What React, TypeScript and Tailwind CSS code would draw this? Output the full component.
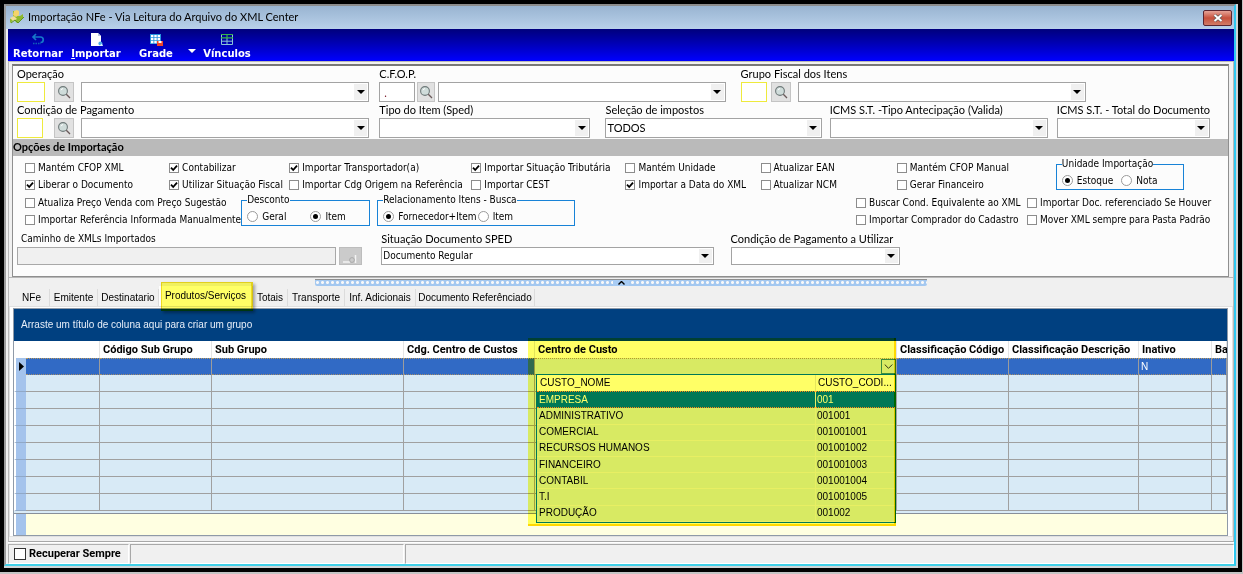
import React from 'react';

const TAHOMA = 'font-["DejaVu_Sans_Condensed","DejaVu_Sans",sans-serif] text-[10px]';

function Combo({ label, value = '', small = false, bare = false, className = '' }: { label: string; value?: string; small?: boolean; bare?: boolean; className?: string }) {
  const id = React.useId();
  return (
    <div className={`min-w-0 ${className}`}>
      {!bare && <FieldLabel id={id}>{label}</FieldLabel>}
      <div className={`relative flex border border-[#a3a3a3] bg-white ${small ? 'h-[18px]' : 'h-5'}`}>
        <select id={id} aria-label={bare ? label : undefined} defaultValue={value} className={`min-w-0 flex-1 appearance-none bg-transparent pl-px leading-4 outline-none ${small ? TAHOMA : 'text-[11px]'}`}>
          <option value={value}>{value}</option>
        </select>
        <span className="pointer-events-none absolute inset-y-0 right-0 m-px flex w-[13px] items-center justify-center bg-[#f0f0f0]">
          <svg width="8" height="4" viewBox="0 0 8 4"><path d="M0 0h8L4 4z" fill="#000" /></svg>
        </span>
      </div>
    </div>
  );
}

function FieldLabel({ id, children, font = 'text-[11px]' }: { id: string; children: React.ReactNode; font?: string }) {
  return <label htmlFor={id} className={`block h-[15px] whitespace-nowrap leading-[14px] ${font}`}>{children}</label>;
}

function Lookup({ label, code = '', input, search, gap, className = '' }: { label: string; code?: string; input: string; search: string; gap: string; className?: string }) {
  const id = React.useId();
  return (
    <div className={`min-w-0 ${className}`}>
      <FieldLabel id={id}>{label}</FieldLabel>
      <div className="flex">
        <input id={id} defaultValue={code} className={`h-5 shrink-0 bg-white px-1 text-[11px] text-[#7a1a2a] outline-none ${input}`} />
        <button type="button" aria-label={`Pesquisar ${label}`} className={`flex h-5 shrink-0 items-center justify-center border border-[#c4c4c4] bg-[#e1e1e1] ${search}`}>
          <svg width="14" height="14" viewBox="0 0 14 14" fill="none">
            <circle cx="6" cy="6" r="4.4" fill="#cfdcda" stroke="#6f7a7a" strokeWidth="1.1" />
            <path d="M4 5.2A2.4 2.4 0 0 1 6 3.6" stroke="#fff" />
            <path d="M9.3 9.3L13 13" stroke="#6a5a5a" strokeWidth="1.3" />
          </svg>
        </button>
        <Combo label={`${label} - descrição`} bare className={`flex-1 ${gap}`} />
      </div>
    </div>
  );
}

function Check({ children, checked = false }: { children: React.ReactNode; checked?: boolean }) {
  return (
    <label className="flex h-[17px] items-center gap-[3px] whitespace-nowrap">
      <span className="relative flex size-[10px] shrink-0">
        <input type="checkbox" defaultChecked={checked} className="peer size-[10px] appearance-none border border-[#8c8c8c] bg-white" />
        <svg className="pointer-events-none absolute inset-0 hidden peer-checked:block" width="10" height="10" viewBox="0 0 10 10" fill="none">
          <path d="M2 4.6L4.2 7L8 2.6" stroke="#000" strokeWidth="1.8" />
        </svg>
      </span>
      {children}
    </label>
  );
}

function Radio({ children, name, checked = false }: { children: React.ReactNode; name: string; checked?: boolean }) {
  return (
    <label className="flex items-center gap-1 whitespace-nowrap">
      <span className="relative flex size-[11px] shrink-0">
        <input type="radio" name={name} defaultChecked={checked} className="peer size-[11px] appearance-none rounded-full border border-[#9a9a9a] bg-white" />
        <span className="pointer-events-none absolute inset-[3px] hidden rounded-full bg-black peer-checked:block" />
      </span>
      {children}
    </label>
  );
}

function Group({ title, children, className = '' }: { title: string; children: React.ReactNode; className?: string }) {
  return (
    <fieldset className={`h-8 min-w-0 border border-[#1883d7] pl-[5px] ${className}`}>
      <legend className="h-3 whitespace-nowrap leading-3">{title}</legend>
      <div className="flex h-5 items-center">{children}</div>
    </fieldset>
  );
}

function ToolButton({ icon, children, className = '' }: { icon: React.ReactNode; children: React.ReactNode; className?: string }) {
  return (
    <button type="button" className={`flex flex-col items-center ${className}`}>
      {icon}
      <span className="leading-4">{children}</span>
    </button>
  );
}

function Toolbar() {
  return (
    <div className='flex h-8 items-start bg-linear-to-b from-[#00007c] to-[#0000ff] pt-[4px] pl-[6px] font-["DejaVu_Sans",sans-serif] text-[10px] font-bold text-white'>
      <ToolButton className="w-12" icon={
        <svg width="14" height="13" viewBox="0 0 14 13" fill="none">
          <path d="M5 1L2 4l3 3M2 4h7.5a2.700 2.700 0 0 1 0 5.500" stroke="#1678c8" strokeWidth="1.7" />
          <path d="M2 10.500h8" stroke="#1060b8" strokeWidth="1.4" strokeDasharray="1.5 1" />
        </svg>}>Retornar</ToolButton>
      <ToolButton className="ml-[10px] w-12" icon={
        <svg width="14" height="13" viewBox="0 0 14 13">
          <path d="M2 0h7l3 3v10H2z" fill="#fff" /><path d="M9 0v3h3z" fill="#b9c8de" />
          <circle cx="11.4" cy="10.4" r="2" fill="#49a8e8" /><path d="M10 13h4l-1-2.400z" fill="#d7f3ff" />
        </svg>}><span className="underline">I</span>mportar</ToolButton>
      <ToolButton className="ml-[18px] w-9" icon={
        <svg width="14" height="13" viewBox="0 0 14 13">
          <path d="M1 1h11v10H1z" fill="#2795df" />
          <path d="M2 2h2.4v2.2H2zM5.3 2h2.4v2.2H5.3zM8.6 2H11v2.2H8.6zM2 5h2.4v2.2H2zM5.3 5h2.4v2.2H5.3zM8.6 5H11v2.2H8.6zM2 8h2.4v2.2H2zM5.3 8h2.4v2.2H5.3z" fill="#fff" />
          <path d="M8 8h6v5H8z" fill="#f04428" /><path d="M9.5 8h3v2h-3z" fill="#fff" />
        </svg>}>Grade</ToolButton>
      <button type="button" aria-label="Mais opções de grade" className="mt-4 ml-[14px]">
        <svg width="8" height="4" viewBox="0 0 8 4"><path d="M0 0h8L4 4z" fill="#fff" /></svg>
      </button>
      <ToolButton className="ml-[9px] w-11" icon={
        <svg width="14" height="13" viewBox="0 0 14 13" fill="none">
          <path d="M1.5 1.5h11v10h-11zM1.5 8.2h11M7 5v6.5" stroke="#8bc4d8" />
          <path d="M1 1.5h12M1 4.8h12M7 1v4" stroke="#35b24a" strokeWidth="1.2" />
        </svg>}>Vínculos</ToolButton>
    </div>
  );
}

function ImportForm() {
  const pathId = React.useId();
  return (
    <section className="border border-t-2 border-[#8f8f8f] border-t-[#777] bg-[#fcfcfc] pt-px">
      <div className="flex flex-col gap-px pb-px pl-1">
        <div className="grid grid-cols-[352fr_10fr_346fr_15fr_345fr_142fr]">
          <Lookup label="Operação" input="w-7 border border-[#eeea3c]" search="ml-[9px] w-5" gap="ml-[7px]" />
          <Lookup className="col-start-3" label="C.F.O.P." code="." input="w-9 border border-[#a3a3a3]" search="ml-[2px] w-[18px]" gap="ml-[3px]" />
          <Lookup className="col-start-5" label="Grupo Fiscal dos Itens" input="w-[26px] border border-[#eeea3c]" search="ml-1 w-5" gap="ml-[7px]" />
        </div>
        <div className="grid grid-cols-[352fr_10fr_211fr_15fr_216fr_8fr_218fr_9fr_153fr_18fr]">
          <Lookup label="Condição de Pagamento" input="w-[26px] border border-[#eeea3c]" search="ml-[11px] w-5" gap="ml-[7px]" />
          <Combo className="col-start-3" label="Tipo do Item (Sped)" />
          <Combo className="col-start-5" label="Seleção de impostos" value="TODOS" />
          <Combo className="col-start-7" label="ICMS S.T. -Tipo Antecipação (Valida)" />
          <Combo className="col-start-9" label="ICMS S.T. - Total do Documento" />
        </div>
      </div>
      <h2 className="h-[17px] bg-[#bababa] text-[11px] leading-4 font-bold">Opções de Importação</h2>
      <div className={`pt-[3px] ${TAHOMA}`}>
        <div className="grid grid-cols-[144fr_120fr_182fr_154fr_135fr_136fr_159fr_172fr] pl-3">
          <div><Check>Mantém CFOP XML</Check><Check checked>Liberar o Documento</Check></div>
          <div><Check checked>Contabilizar</Check><Check checked>Utilizar Situação Fiscal</Check></div>
          <div><Check checked>Importar Transportador(a)</Check><Check>Importar Cdg Origem na Referência</Check></div>
          <div><Check checked>Importar Situação Tributária</Check><Check>Importar CEST</Check></div>
          <div><Check>Mantém Unidade</Check><Check checked>Importar a Data do XML</Check></div>
          <div><Check>Atualizar EAN</Check><Check>Atualizar NCM</Check></div>
          <div><Check>Mantém CFOP Manual</Check><Check>Gerar Financeiro</Check></div>
          <Group title="Unidade Importação" className="mr-11 -mt-px">
            <Radio name="unidade" checked>Estoque</Radio><span className="w-2" /><Radio name="unidade">Nota</Radio>
          </Group>
        </div>
        <div className="mt-px grid grid-cols-[215fr_129fr_7fr_198fr_281fr_171fr_201fr] pl-3">
          <div><Check>Atualiza Preço Venda com Preço Sugestão</Check><Check>Importar Referência Informada Manualmente</Check></div>
          <Group title="Desconto">
            <Radio name="desconto">Geral</Radio><span className="w-6" /><Radio name="desconto" checked>Item</Radio>
          </Group>
          <Group title="Relacionamento Itens - Busca" className="col-start-4">
            <Radio name="relacao" checked>Fornecedor+Item</Radio><span className="w-px" /><Radio name="relacao">Item</Radio>
          </Group>
          <div className="col-start-6"><Check>Buscar Cond. Equivalente ao XML</Check><Check>Importar Comprador do Cadastro</Check></div>
          <div className="col-start-7"><Check>Importar Doc. referenciado Se Houver</Check><Check>Mover XML sempre para Pasta Padrão</Check></div>
        </div>
      </div>
      <div className="grid grid-cols-[345fr_19fr_332fr_17fr_169fr_328fr] pt-1 pb-[11px] pl-1">
        <div>
          <FieldLabel id={pathId} font={`pl-1 ${TAHOMA}`}>Caminho de XMLs Importados</FieldLabel>
          <div className="flex gap-[3px]">
            <input id={pathId} disabled className="h-[18px] min-w-0 flex-1 border border-[#a8a8a8] bg-[#f0f0f0]" />
            <button type="button" disabled aria-label="Selecionar pasta" className="flex h-[18px] w-[23px] items-end justify-end border border-[#bdbdbd] bg-[#cbcbcb] pr-1">
              <svg width="14" height="10" viewBox="0 0 14 10" fill="none"><path d="M0 8h7M12.500 1v8" stroke="#f4f4f4" strokeWidth="1.500" /><circle cx="9" cy="6" r="2.400" stroke="#aaa" /></svg>
            </button>
          </div>
        </div>
        <Combo small className="col-start-3" label="Situação Documento SPED" value="Documento Regular" />
        <Combo small className="col-start-5" label="Condição de Pagamento a Utilizar" />
      </div>
    </section>
  );
}

const tabs = [
  ['NFe', 'w-9'], ['Emitente', 'w-12'], ['Destinatario', 'w-[61px]'], ['Produtos/Serviços', 'w-[94px]'],
  ['Totais', 'w-[35px]'], ['Transporte', 'w-[57px]'], ['Inf. Adicionais', 'w-[71px]'], ['Documento Referênciado', 'w-[119px]'],
];

function Tabs() {
  return (
    <div role="tablist" className="flex h-[17px] pl-[5px]">
      {tabs.map(([name, width], i) => (
        <button key={name} role="tab" type="button" aria-selected={i === 3} className={`relative shrink-0 border-r border-[#dcdcdc] whitespace-nowrap ${width} ${i === 3 ? '-mt-[3px] bg-white' : ''}`}>
          {name}
          {i === 3 && <span className="absolute -top-1 -right-px left-[2px] z-20 h-[29px] border border-r-2 border-b-2 border-[#f0dc20] bg-[#ffff66] shadow-[2px_2px_3px_#aaa] mix-blend-multiply" />}
        </button>
      ))}
    </div>
  );
}

const headers = ['', 'Código Sub Grupo', 'Sub Grupo', 'Cdg. Centro de Custos', 'Centro de Custo', 'Classificação Código', 'Classificação Descrição', 'Inativo', 'Ba'];

const costCenters = [
  ['EMPRESA', '001'], ['ADMINISTRATIVO', '001001'], ['COMERCIAL', '001001001'], ['RECURSOS HUMANOS', '001001002'],
  ['FINANCEIRO', '001001003'], ['CONTABIL', '001001004'], ['T.I', '001001005'], ['PRODUÇÃO', '001002'],
];

function CostCenterList() {
  return (
    <div className="absolute top-[15px] right-0 left-[1px] z-10 h-[149px] border border-[#0078d7] bg-[#d8eaf6] text-black">
      <table className="size-full table-fixed border-separate border-spacing-0 text-left">
        <colgroup><col /><col className="w-20" /></colgroup>
        <thead>
          <tr className="h-4 bg-white">
            <th className="pl-[3px] font-normal">CUSTO_NOME</th>
            <th className="border-l border-[#e6e6e6] pl-[2px] font-normal">CUSTO_CODI...</th>
          </tr>
        </thead>
        <tbody>
          {costCenters.map(([name, code], i) => (
            <tr key={code} className={i === 0 ? 'bg-[#0078d7] text-white' : ''}>
              <td className={`pl-[2px] ${i === 0 ? 'border-y border-dotted border-[#ff8728]' : 'border-b border-[#e8eff6]'}`}>{name}</td>
              <td className={`border-l border-l-[#e8eff6] pl-px ${i === 0 ? 'border-y border-y-[#ff8728] [border-bottom-style:dotted] [border-top-style:dotted]' : 'border-b border-[#e8eff6]'}`}>{code}</td>
            </tr>
          ))}
        </tbody>
      </table>
    </div>
  );
}

function Grid() {
  return (
    <div className="relative overflow-hidden border border-[#8f9aa8]">
      <div className="flex h-8 items-center bg-[#004080] pl-[7px] text-[#e6eef8]">Arraste um título de coluna aqui para criar um grupo</div>
      <table className="w-full table-fixed border-separate border-spacing-0">
        <colgroup>
          <col className="w-3" /><col className="w-[74px]" /><col className="w-[112px]" /><col className="w-[192px]" /><col className="w-[131px]" />
          <col className="w-[362px]" /><col className="w-[112px]" /><col className="w-[130px]" /><col className="w-[73px]" /><col />
        </colgroup>
        <thead>
          <tr className='h-[17px] bg-white text-left font-["Roboto",sans-serif] text-[11px]'>
            <th />
            {headers.map((h, i) => (
              <th key={i} className="relative h-[17px] border-r border-[#e4e4e4] p-0 pl-[3px] whitespace-nowrap">
                {h}
                {i === 4 && <span className="pointer-events-none absolute -top-[3px] right-0 -left-[7px] z-20 h-[188px] border-r-2 border-b-2 border-[#ffd800] bg-[#ffff66] mix-blend-multiply" />}
              </th>
            ))}
          </tr>
        </thead>
        <tbody>
          <tr className="text-white">
            <td className="h-[17px] border-l-2 border-white bg-[#a4c3ec] p-0"><svg className="m-auto" width="5" height="9" viewBox="0 0 5 9"><path d="M0 0l5 4.500L0 9z" fill="#000" /></svg></td>
            {headers.map((_, i) => (
              <td key={i} className={`h-[17px] border-t border-r border-b border-r-[#9c9c9c] border-t-[#b89a60] border-b-[#a08c6c] p-0 pl-[2px] leading-[14px] [border-bottom-style:dotted] [border-top-style:dotted] ${i === 4 ? 'relative bg-[#d8eaf6]' : 'bg-[#316ac5]'}`}>
                {i === 7 && 'N'}
                {i === 4 && (
                  <>
                    <button type="button" aria-label="Abrir centros de custo" className="absolute top-0 right-0 flex h-[15px] w-[15px] items-center justify-center border border-[#3c8c98] bg-[#d8eaf6]">
                      <svg width="9" height="5" viewBox="0 0 9 5" fill="none"><path d="M.7.500l3.800 3.800L8.300.500" stroke="#333" /></svg>
                    </button>
                    <CostCenterList />
                  </>
                )}
              </td>
            ))}
          </tr>
          {Array.from({ length: 8 }, (_, r) => (
            <tr key={r}>
              <td className="h-[17px] border-b border-l-2 border-b-[#8fa8c8] border-l-white bg-[#a4c3ec] p-0" />
              {headers.map((_, i) => <td key={i} className="h-[17px] border-r border-b border-[#a0a0a0] bg-[#d8eaf6] p-0" />)}
            </tr>
          ))}
        </tbody>
      </table>
      <div className="h-[3px] border-b border-[#888f99] bg-[#d8eaf6]" />
      <div className="flex h-[21px] bg-[#ffffe1]"><div className="w-3 border-l-2 border-white bg-[#a4c3ec]" /></div>
    </div>
  );
}

export default function App() {
  return (
    <div className='min-h-screen bg-[#c4c4c4] pr-px pb-px font-["Lato",sans-serif] text-black'>
      <div className="border-4 border-black bg-[#d0d4d6] pr-[2px] pb-[2px]">
        <main className="border-2 border-t-[#8c8c8c] border-r-[#30c8f0] border-b-[#40d0e8] border-l-[#9c9c9c] bg-[#f0f0f0]">
          <header className="flex h-[23px] items-center bg-linear-to-b from-[#99b4d1] to-[#b9d1ea] pr-[2px] pl-[3px]">
            <svg width="16" height="15" viewBox="0 0 16 15">
              <path d="M4 1h4v5h3l3-2v4l-6 5-3-3-4 3V9l3-2z" fill="#8db92c" />
              <path d="M5 1l3-1 2 1v4L7 7 4 5z" fill="#f5d36a" /><path d="M1 8l4-2 3 3-4 2z" fill="#f0dc9a" />
              <path d="M2 13l4-3 3 3 6-6" stroke="#5d951c" fill="none" />
            </svg>
            <h1 className="ml-[3px] flex-1 text-[11px]">Importação NFe - Via Leitura do Arquivo do XML Center</h1>
            <button type="button" aria-label="Fechar" className="flex h-4 w-[29px] items-center justify-center rounded-xs border border-[#5a2530] bg-linear-to-b from-[#e5a397] via-[#c6503c] via-50% to-[#d07a66]">
              <svg width="10" height="8" viewBox="0 0 10 8"><path d="M1.500 1l7 6M8.500 1l-7 6" stroke="#555" strokeWidth="3.200" /><path d="M1.500 1l7 6M8.500 1l-7 6" stroke="#fff" strokeWidth="2" /></svg>
            </button>
          </header>
          <div className="pl-[2px]">
            <Toolbar />
            <div className="border-x border-t border-[#b8b8b8] pt-[2px] pr-1 pl-[3px]"><ImportForm /></div>
            <div className='border border-[#b8b8b8] border-b-[#a8a8a8] pb-1 font-["Liberation_Sans",sans-serif] text-[10px] leading-[14px]'>
              <div className="mx-auto mt-px flex h-[7px] w-1/2 rounded-b-xs border-t border-[#909090] bg-[radial-gradient(circle,#f8f8f8_1px,#a4c8f0_2px)] bg-[length:5px_5px]">
                <button type="button" aria-label="Recolher painel" className="mx-auto flex w-4 items-center justify-center bg-[#a8ccf4]">
                  <svg width="7" height="4" viewBox="0 0 7 4" fill="none"><path d="M.5 3.500l3-3 3 3" stroke="#000" strokeWidth="1.400" /></svg>
                </button>
              </div>
              <div className="mt-[3px]"><Tabs /></div>
              <div className="border border-[#e0e0e0] bg-white pt-px pr-1 pl-[3px]"><Grid /></div>
            </div>
            <footer className='flex h-[22px] border-t border-white pt-px font-["Roboto",sans-serif] text-[11px] font-bold'>
              <label className="flex w-[121px] shrink-0 items-center gap-[3px] border border-[#b0b0b0] border-r-white border-b-white pl-[5px] whitespace-nowrap">
                <input type="checkbox" className="size-3 appearance-none border border-[#333] bg-white" />Recuperar Sempre
              </label>
              <div className="ml-px w-[274px] shrink-0 border border-[#a8a8a8] border-r-white border-b-white" />
              <div className="ml-px flex-1 border border-[#a8a8a8] border-r-white border-b-white" />
            </footer>
          </div>
        </main>
      </div>
    </div>
  );
}
